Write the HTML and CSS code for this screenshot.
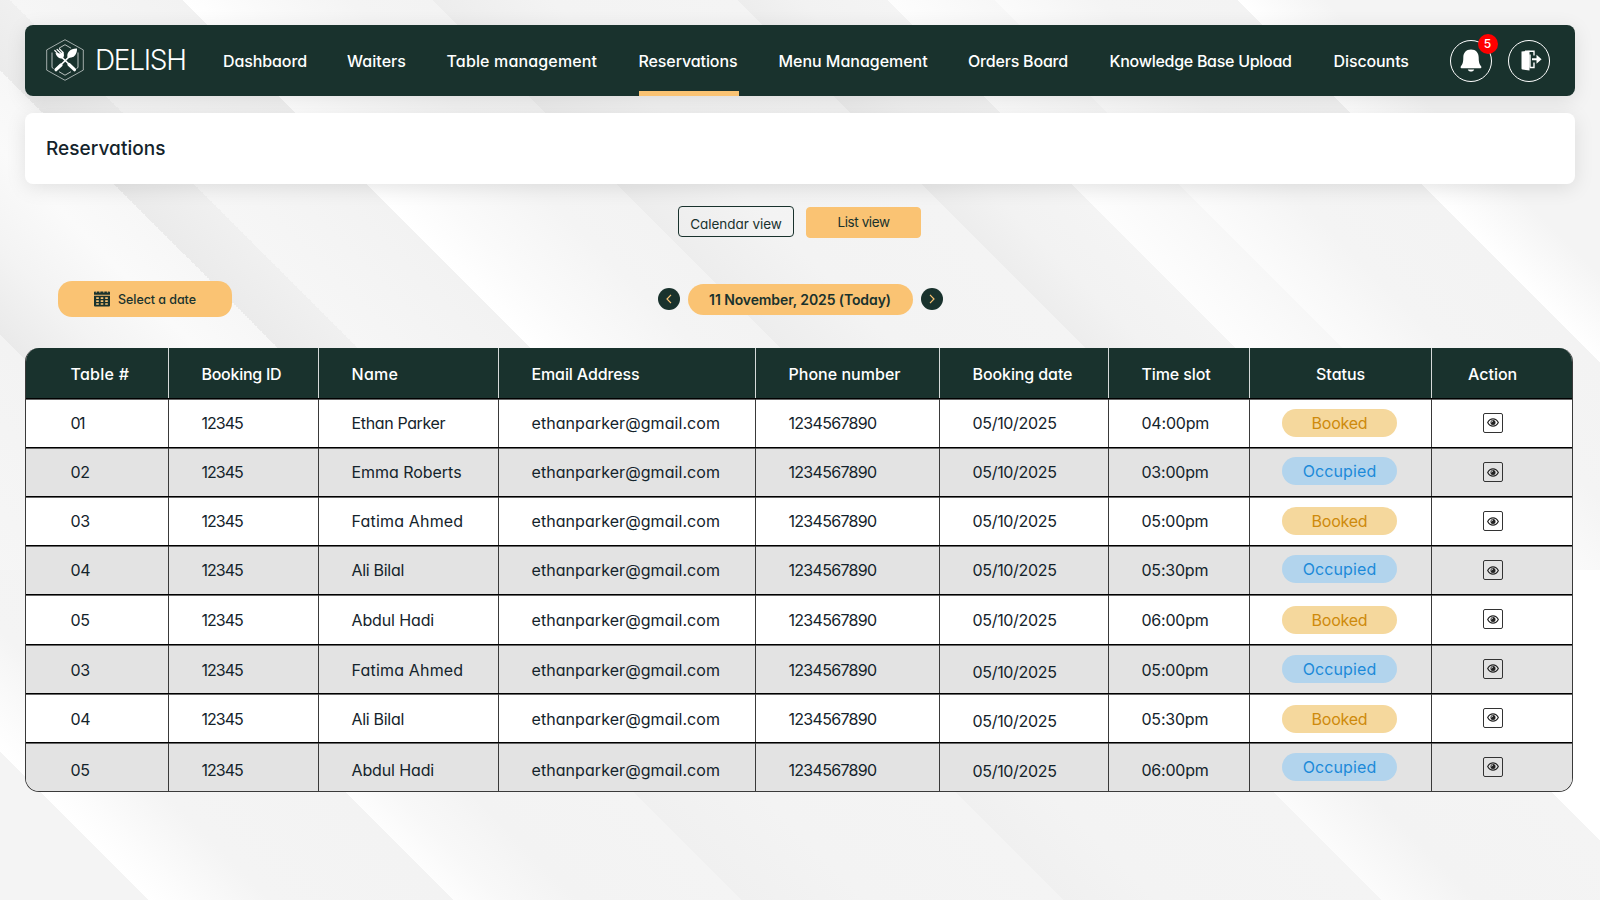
FILE: index.html
```html
<!DOCTYPE html>
<html lang="en">
<head>
<meta charset="utf-8">
<title>Delish - Reservations</title>
<link rel="stylesheet" href="styles.css">
</head>
<body>
<svg class="defs" aria-hidden="true">
  <symbol id="eye" viewBox="0 0 12 9">
    <path d="M.7 4.5C2 2 3.9.9 6 .9s4 1.1 5.3 3.6C10 7 8.100 8.100 6 8.100S2 7 .7 4.500Z" fill="none" stroke="#222" stroke-width="1.200"/>
    <circle cx="6" cy="4.500" r="2.500" fill="#222"/>
    <path d="M4.600 4.400A1.400 1.400 0 0 1 6 3" fill="none" stroke="#fff" stroke-width=".8"/>
  </symbol>
</svg>

<header class="navbar">
  <div class="brand">
    <svg class="brand-mark" viewBox="0 0 38 42">
      <g fill="none" stroke="#fff">
        <path d="M19 .7 37.300 10.900V31.100L19 41.300.7 31.100V10.900Z" stroke-width=".6"/>
        <path d="M13 9.200 19 5.700 25 9.200M32 13.500V28.500L30.500 29.500M25 32.700 19 36.200 13 32.700M7.500 29.500 6 28.500V13.500" stroke-width=".7"/>
        <path d="M10 30.500 25.500 15.500" stroke-width="1.700"/>
        <path d="M10 30.700 15 26M28.500 30.700 23 25.500" stroke-width="3.200" stroke-linecap="round"/>
        <path d="M14.500 17 28 30" stroke-width="1.700"/>
        <path d="M8.800 11.500 13 15.800M11.100 10.500 15 14.300M13.500 9.800 17 13.500" stroke-width="1.200" stroke-linecap="round"/>
      </g>
      <path d="M9.500 14C10.500 17.500 12.500 19.500 16.500 19.500 18.500 17.500 18.300 15 17 12.500L14.500 14.500Z" fill="#fff"/>
      <path d="M21.500 18.500C20.300 13.500 24.500 9.300 31 9.600 31.300 16 27 20 21.500 18.500Z" fill="#fff"/>
    </svg>
    <span class="brand-name">DELISH</span>
  </div>
  <nav class="menu">
    <a class="m-dash">Dashbaord</a>
    <a class="m-wait">Waiters</a>
    <a class="m-table">Table management</a>
    <a class="m-res active">Reservations</a>
    <a class="m-menu">Menu Management</a>
    <a class="m-orders">Orders Board</a>
    <a class="m-know">Knowledge Base Upload</a>
    <a class="m-disc">Discounts</a>
  </nav>
  <div class="tools">
    <div class="round">
      <svg width="22" height="23" viewBox="0 0 22 23" fill="#fff"><path d="M11 .5C6 .5 3.300 4 3.300 8.500 3.300 13.500 2.500 15.500.9 17.300.3 18.300.6 19.200 1.500 19.200H20.500C21.400 19.200 21.700 18.300 21.100 17.300 19.500 15.500 18.700 13.500 18.700 8.500 18.700 4 16 .5 11 .5ZM7.800 20.500H14.200C13.700 22 12.500 22.600 11 22.600S8.300 22 7.800 20.500Z"/></svg>
      <span class="badge">5</span>
    </div>
    <div class="round">
      <svg class="exit" width="21" height="21" viewBox="0 0 21 21"><path d="M.5 1.500 8.500.8V20.500L1.500 19.500Q.5 19.300.5 18.500Z" fill="#fff"/><path d="M4 1.200H13V5.500M13 12.500V17.500H8.500M9 4.500V17" fill="none" stroke="#fff" stroke-width="1.400"/><path d="M11 8.200H15.500V4.700L20.600 9.200 15.500 13.700V10.200H11Z" fill="#fff"/></svg>
    </div>
  </div>
</header>

<section class="title-card"><h1>Reservations</h1></section>

<div class="views">
  <button class="view">Calendar view</button>
  <button class="view on">List view</button>
</div>

<div class="date-bar">
  <button class="pick">
    <svg width="16" height="17" viewBox="0 0 16 17"><path d="M1 1.500H15Q16 1.500 16 2.500V4.700H0V2.500Q0 1.500 1 1.500ZM0 5.700H16V15.500Q16 16.500 15 16.500H1Q0 16.500 0 15.500Z" fill="#19322d"/><path d="M2.300 1.200V2.500M5.800 1.200V2.500M9.800 1.200V2.500M13.500 1.200V2.500" stroke="#fac373" stroke-width="1.300"/><path d="M2.200 7.300H4.800V9H2.200ZM6.700 7.300H9.300V9H6.700ZM11.200 7.300H13.800V9H11.200ZM2.200 10.300H4.800V12H2.200ZM6.700 10.300H9.300V12H6.700ZM11.200 10.300H13.800V12H11.200ZM2.200 13.300H4.800V14.800H2.200ZM6.700 13.300H9.300V14.800H6.700ZM11.200 13.300H13.800V14.800H11.200Z" fill="#fac373"/></svg>
    <span>Select a date</span>
  </button>
  <div class="stepper">
    <span class="arrow"><svg width="6" height="10" viewBox="0 0 6 10"><path d="M5 .8 1 5 5 9.200" fill="none" stroke="#fac373" stroke-width="1.200"/></svg></span>
    <span class="today">11 November, 2025 (Today)</span>
    <span class="arrow"><svg width="6" height="10" viewBox="0 0 6 10"><path d="M1 .8 5 5 1 9.200" fill="none" stroke="#fac373" stroke-width="1.200"/></svg></span>
  </div>
</div>

<main class="table">
  <div class="row head">
    <div class="h-table">Table #</div><div class="h-id">Booking ID</div><div class="h-name">Name</div><div>Email Address</div><div class="h-phone">Phone number</div><div class="h-date">Booking date</div><div>Time slot</div><div class="h-status">Status</div><div class="h-action">Action</div>
  </div>
  <div class="row">
    <div class="num one">01</div><div class="id">12345</div><div class="n-ethan">Ethan Parker</div><div class="mail">ethanparker@gmail.com</div><div class="phone">1234567890</div><div class="date">05/10/2025</div><div class="time">04:00pm</div><div class="status"><span class="booked">Booked</span></div><div class="act"><i><svg><use href="#eye"/></svg></i></div>
  </div>
  <div class="row">
    <div class="num">02</div><div class="id">12345</div><div class="n-emma">Emma Roberts</div><div class="mail">ethanparker@gmail.com</div><div class="phone">1234567890</div><div class="date">05/10/2025</div><div class="time">03:00pm</div><div class="status"><span class="occupied">Occupied</span></div><div class="act"><i><svg><use href="#eye"/></svg></i></div>
  </div>
  <div class="row">
    <div class="num">03</div><div class="id">12345</div><div class="n-fatima">Fatima Ahmed</div><div class="mail">ethanparker@gmail.com</div><div class="phone">1234567890</div><div class="date">05/10/2025</div><div class="time">05:00pm</div><div class="status"><span class="booked">Booked</span></div><div class="act"><i><svg><use href="#eye"/></svg></i></div>
  </div>
  <div class="row">
    <div class="num">04</div><div class="id">12345</div><div class="n-ali">Ali Bilal</div><div class="mail">ethanparker@gmail.com</div><div class="phone">1234567890</div><div class="date">05/10/2025</div><div class="time">05:30pm</div><div class="status"><span class="occupied">Occupied</span></div><div class="act"><i><svg><use href="#eye"/></svg></i></div>
  </div>
  <div class="row low">
    <div class="num">05</div><div class="id">12345</div><div class="n-abdul">Abdul Hadi</div><div class="mail">ethanparker@gmail.com</div><div class="phone">1234567890</div><div class="date">05/10/2025</div><div class="time">06:00pm</div><div class="status"><span class="booked">Booked</span></div><div class="act"><i><svg><use href="#eye"/></svg></i></div>
  </div>
  <div class="row low lower-date">
    <div class="num">03</div><div class="id">12345</div><div class="n-fatima">Fatima Ahmed</div><div class="mail">ethanparker@gmail.com</div><div class="phone">1234567890</div><div class="date">05/10/2025</div><div class="time">05:00pm</div><div class="status"><span class="occupied">Occupied</span></div><div class="act"><i><svg><use href="#eye"/></svg></i></div>
  </div>
  <div class="row low lower-date">
    <div class="num">04</div><div class="id">12345</div><div class="n-ali">Ali Bilal</div><div class="mail">ethanparker@gmail.com</div><div class="phone">1234567890</div><div class="date">05/10/2025</div><div class="time">05:30pm</div><div class="status"><span class="booked">Booked</span></div><div class="act"><i><svg><use href="#eye"/></svg></i></div>
  </div>
  <div class="row lowest lower-date">
    <div class="num">05</div><div class="id">12345</div><div class="n-abdul">Abdul Hadi</div><div class="mail">ethanparker@gmail.com</div><div class="phone">1234567890</div><div class="date">05/10/2025</div><div class="time">06:00pm</div><div class="status"><span class="occupied">Occupied</span></div><div class="act"><i><svg><use href="#eye"/></svg></i></div>
  </div>
</main>
</body>
</html>
```
FILE: styles.css
```css
* { box-sizing: border-box; }

body {
  margin: 0;
  height: 900px;
  overflow: hidden;
  padding: 25px 25px 0;
  font: 400 16px/20px Inter, "Noto Sans", sans-serif;
  font-feature-settings: "cv11";
  color: #14232b;
  /* lower band of streaks, then the main one */
  background:
    linear-gradient(45deg, #f4f4f4 0 7.700%, #fff 7.700%, #fcfcfc 9.500%, #f4f4f4 14%, #f3f3f3 23.500%, #fdfdfd 23.500%, #f8f8f8 26%, #f3f3f3 30%, #f4f4f4 38.400%, #f0f0f0 38.400%, #f3f3f3 45%, #f4f4f4 55.100%, #f0f0f0 55.100%, #f3f3f3 60%, #f4f4f4 71.600%, #fbfbfb 71.600%, #f3f3f3 76.500%, #f4f4f4 86%, #fff 86%) 0 570px / 1600px 330px no-repeat,
    linear-gradient(45deg, #f4f4f4 0 5.900%, #fff 5.900%, #f6f6f6 12%, #f3f3f3 22.600%, #eaeaea 22.600%, #f3f3f3 26%, #fafafa 30%, #f7f7f7 33.200%, #ebebeb 33.200%, #f0f0f0 36.400%, #f6f6f6 36.400%, #f2f2f2 43.300%, #fff 43.300%, #fafafa 46%, #f4f4f4 50%, #f3f3f3 53.300%, #ededed 53.300%, #f3f3f3 58%, #f4f4f4 65.500%, #ededed 65.500%, #f2f2f2 68%, #f4f4f4 71.500%, #fdfdfd 71.500%, #f7f7f7 75.800%, #fbfbfb 75.800%, #f4f4f4 80%, #f3f3f3 85.500%, #fff 85.500%, #f4f4f4 89%);
}

.defs { display: none; }

/* Navigation */
.navbar {
  display: flex;
  height: 71px;
  padding-left: 21px;
  border-radius: 8px;
  background: #19322d;
  color: #fff;
  box-shadow: 0 4px 20px rgba(0, 0, 0, .1);
}
.brand { display: flex; width: 177px; padding-top: 14px; }
.brand-mark { width: 38px; height: 42px; }
.brand-name {
  margin: 7px 0 0 11px;
  font-size: 28px;
  line-height: 28px;
  font-weight: 350;
  letter-spacing: -1.300px;
}
.menu {
  display: grid;
  grid-template-columns: 84px 59.500px 152px 100px 149.500px 101.500px 184px 76px;
  gap: 40px;
  font-weight: 550;
}
.menu a { padding-top: 25.500px; white-space: nowrap; }
.m-dash { letter-spacing: -.1px; }
.m-wait { letter-spacing: .05px; }
.m-table { letter-spacing: .15px; }
.m-res { letter-spacing: -.1px; }
.m-menu { letter-spacing: -.03px; }
.m-orders { letter-spacing: -.2px; }
.m-know { letter-spacing: -.28px; }
.m-disc { letter-spacing: -.1px; }
.active { border-bottom: 5px solid #fac373; }
.tools { display: flex; gap: 16px; margin: 15px 0 0 40px; }
.round {
  position: relative;
  display: flex;
  align-items: center;
  justify-content: center;
  width: 42px;
  height: 42px;
  border: 1px solid #fff;
  border-radius: 50%;
}
.round svg { margin-bottom: 2px; }
.round .exit { margin-left: 5px; }
.badge {
  position: absolute;
  top: -7px;
  right: -7px;
  width: 20px;
  height: 20px;
  border-radius: 50%;
  background: #f00;
  font-size: 12px;
  font-weight: 500;
  text-align: center;
}

/* Page heading */
.title-card {
  height: 71px;
  margin-top: 17px;
  padding: 24px 21px;
  border-radius: 8px;
  background: #fff;
  box-shadow: 0 4px 20px rgba(0, 0, 0, .1);
}
h1 { margin: 0; font-size: 19px; line-height: 24px; font-weight: 550; letter-spacing: .05px; }

button { border: 0; padding: 0; font: inherit; font-feature-settings: inherit; color: #19322d; }
.views { display: flex; justify-content: center; gap: 12px; margin-top: 22px; padding-right: 1px; }
.view {
  width: 116px;
  height: 31px;
  padding-top: 4px;
  border: 1px solid #19322d;
  border-radius: 4px;
  background: none;
  font-size: 13.500px;
  line-height: 20px;
  letter-spacing: -.06px;
}
.view.on {
  width: 115px;
  padding: 0;
  margin-top: .6px;
  border-color: #fac373;
  background: #fac373;
  letter-spacing: -.41px;
}

/* Date controls */
.date-bar {
  display: grid;
  grid-template-columns: 599.500px auto 1fr;
  align-items: center;
  margin-top: 43.900px;
  padding-left: 33px;
}
.pick {
  display: flex;
  align-items: center;
  justify-content: center;
  gap: 8px;
  width: 174px;
  height: 36px;
  border-radius: 14px;
  background: #fac373;
  font-size: 12.500px;
  font-weight: 500;
  letter-spacing: -.06px;
}
.pick svg { margin-bottom: 2px; }
.pick span { padding-top: 2px; }
.stepper { display: flex; align-items: center; gap: 8px; }
.arrow {
  display: flex;
  align-items: center;
  justify-content: center;
  width: 22px;
  height: 22px;
  border-radius: 50%;
  background: #19322d;
}
.today {
  width: 225px;
  height: 31px;
  border-radius: 16px;
  background: #fac373;
  color: #19322d;
  font-size: 14px;
  line-height: 32px;
  font-weight: 600;
  letter-spacing: -.1px;
  text-align: center;
}

/* Reservation table */
.table {
  width: 1548px;
  height: 444px;
  margin-top: 30.500px;
  overflow: hidden;
  border: 1px solid #3a3a3a;
  border-top: 0;
  border-radius: 14px;
}
.row {
  display: grid;
  grid-template-columns: 143px 150px 180px 257px 184px 169px 141px 182px 1fr;
  height: 49.125px;
  border-bottom: 1px solid #000;
  background: #fff;
  box-shadow: inset 0 1px #666;
}
.row:nth-child(odd) { background: #e3e3e3; }
.row:last-child { border-bottom: 0; }
.row > div { padding: 14px 0 0 32.500px; border-right: 1px solid #3a3a3a; white-space: nowrap; }
.row > div:first-child { padding-left: 44.500px; }
.row > div:last-child { border-right: 0; }
.row.head {
  height: 51px;
  background: #19322d;
  color: #fff;
  font-weight: 550;
  letter-spacing: -.12px;
  box-shadow: none;
}
.head > div { padding-top: 15.600px; border-color: #d5dad9 !important; }
.row.head > div { padding-top: 15.600px; }
.low > div { padding-top: 15px !important; }
.lowest > div { padding-top: 17px !important; }
.lower-date .date { padding-top: 17px !important; }
.lowest .date { padding-top: 18.600px !important; }

.h-table { letter-spacing: .25px; }
.h-id { letter-spacing: -.28px; }
.h-name { letter-spacing: .3px; }
.h-phone { letter-spacing: .02px; }
.h-date { letter-spacing: -.1px; }
.row .h-status { padding-left: 66px; letter-spacing: 0; }
.row .h-action { padding-left: 36px; letter-spacing: 0; }
.num { letter-spacing: -.36px; }
.one { letter-spacing: -1.600px; }
.id { letter-spacing: -1px; }
.n-ethan { letter-spacing: -.36px; }
.n-emma { letter-spacing: -.04px; }
.n-fatima { letter-spacing: .18px; }
.n-ali { letter-spacing: -.3px; }
.n-abdul { letter-spacing: -.12px; }
.mail { letter-spacing: .07px; }
.phone { letter-spacing: -.7px; }
.date { letter-spacing: -.32px; }
.time { letter-spacing: -.22px; }

.row .status { padding: 10px 0 0 32px; }
.low .status, .lowest .status { padding-top: 11px !important; }
.status span {
  display: block;
  width: 115px;
  height: 28px;
  border-radius: 14px;
  line-height: 28px;
  text-align: center;
}
.booked { background: #f5d89d; color: #ce8a0c; letter-spacing: -.24px; }
.occupied { background: #b2d4ed; color: #1c8ad9; letter-spacing: .12px; }
.row:nth-child(3) .occupied, .row:nth-child(5) .occupied, .row:nth-child(n+7) .occupied { margin-top: -1px; }
.row .act { padding: 14px 0 0 51px !important; }
.act i {
  display: flex;
  align-items: center;
  justify-content: center;
  width: 20px;
  height: 20px;
  border: 1px solid #333;
  border-radius: 2px;
}
.act svg { width: 12px; height: 9px; }
```
